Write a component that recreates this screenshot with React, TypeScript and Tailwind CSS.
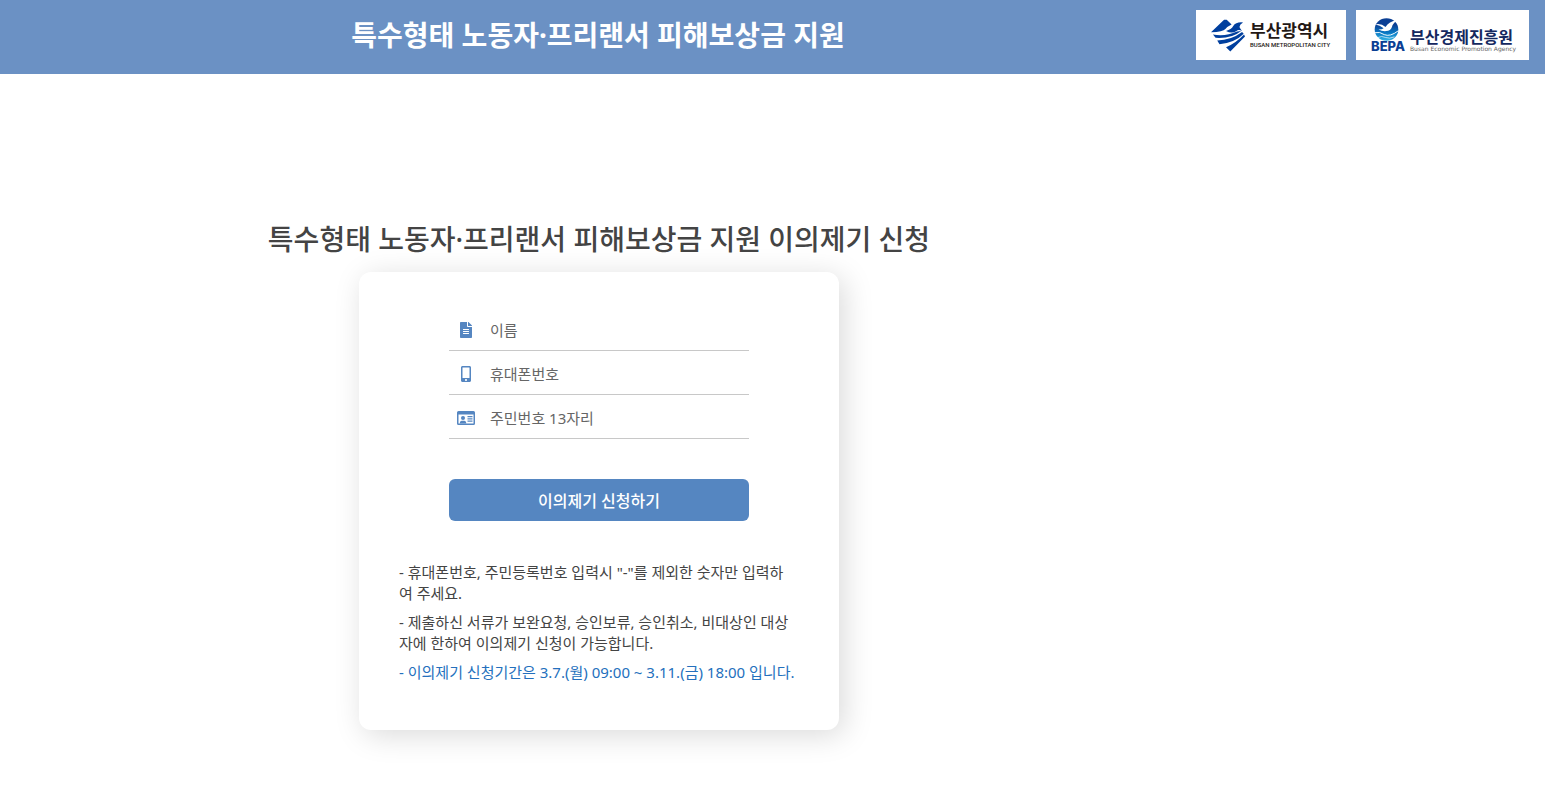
import { useState } from 'react'
import type { ReactNode } from 'react'
import { FaFileAlt, FaMobileAlt } from 'react-icons/fa'

type FieldProps = {
  id: string
  label: string
  icon: ReactNode
  type?: string
  value: string
  onChange: (value: string) => void
}

function Field({ id, label, icon, type = 'text', value, onChange }: FieldProps) {
  return (
    <div className="flex h-10 items-center border-b border-[#c8c8c8] pb-[2px]">
      <label htmlFor={id} aria-label={label} className="flex w-[34px] shrink-0 justify-center text-base text-[#5586c1]">
        {icon}
      </label>
      <input
        id={id}
        type={type}
        placeholder={label}
        value={value}
        onChange={(e) => onChange(e.target.value)}
        className="ml-[7px] h-full min-w-0 flex-1 bg-transparent text-[15px] text-[#444] outline-none placeholder:text-[#666]"
      />
    </div>
  )
}

function IdCardIcon() {
  return (
    <svg viewBox="0 0 18 14" className="h-[14px] w-[18px]" fill="currentColor" aria-hidden="true">
      <path fillRule="evenodd" d="M1.5 0h15A1.5 1.5 0 0 1 18 1.5v11a1.5 1.5 0 0 1-1.5 1.5h-15A1.5 1.5 0 0 1 0 12.5v-11A1.5 1.5 0 0 1 1.5 0zM1.5 3.5v9h15v-9z" />
      <circle cx="6" cy="7" r="2" />
      <path d="M2.8 12.5q0-2.8 2-2.8h2.4q2 0 2 2.8z" />
      <path d="M10.5 5h5v1.2h-5zM10.5 7.3h5v1.2h-5zM10.5 9.6h5v1.2h-5z" />
    </svg>
  )
}

function BusanLogo() {
  return (
    <a href="#busan" className="flex h-[50px] w-[150px] items-center gap-[5px] bg-white pl-[15px]">
      <svg viewBox="14 14 104 100" className="h-[33px] w-[34px] shrink-0" fill="#003f9e" aria-hidden="true">
        <path d="M14 54 L54 16 L62 16 L77 30 Q64 36 58 44 Q51 53 14 54Z" />
        <path d="M60 50 Q76 46 82 35 Q90 22 112 24 Q102 29 101 38 Q104 44 109 50 Q98 45 92 50 Q78 60 60 50Z" />
        <path d="M20 61 Q58 68 94 52 L106 50 Q78 74 28 71Z" />
        <path d="M33 79 Q76 78 109 53 L114 59 Q88 86 40 91Z" />
        <path d="M60 100 Q92 86 115 61 L118 67 L73 113Z" />
      </svg>
      <span className="flex flex-col pb-px whitespace-nowrap">
        <span className="text-[17px] leading-5 font-bold text-[#231815]">부산광역시</span>
        <span className="font-[Roboto] text-[6px] leading-[8px] font-medium text-[#231815]">BUSAN METROPOLITAN CITY</span>
      </span>
    </a>
  )
}

function BepaLogo() {
  return (
    <a href="#bepa" className="flex h-[50px] w-[173px] items-end gap-1 bg-white pb-2 pl-[15px]">
      <span className="flex w-[35px] shrink-0 flex-col">
        <svg viewBox="24 14 78 72" className="ml-[3px] h-[23px] w-[25px]" aria-hidden="true">
          <defs>
            <linearGradient id="sea" x1="0" y1="0" x2="0" y2="1">
              <stop offset="0.3" stopColor="#0b3f94" />
              <stop offset="0.65" stopColor="#0879c4" />
              <stop offset="1" stopColor="#35b5e5" />
            </linearGradient>
          </defs>
          <ellipse cx="63" cy="50" rx="37" ry="35" fill="url(#sea)" />
          <path fill="#fff" d="M28 34 Q46 30 60 42 Q70 24 96 21 Q82 32 80 42 Q76 54 62 55 Q48 56 38 50 Q50 50 54 46 Q42 36 28 34Z" />
          <path fill="none" stroke="#fff" strokeWidth="3" d="M26 60 Q42 56 56 66 Q74 74 100 54" />
          <path fill="none" stroke="#fff" strokeWidth="2" d="M34 76 Q48 68 60 75 Q72 80 88 73" />
        </svg>
        <span className="font-[Inter] text-[13px] leading-[11px] font-extrabold text-[#0b3f94]">BEPA</span>
      </span>
      <span className="flex flex-col whitespace-nowrap">
        <span className="text-[16px] leading-[18px] font-bold text-[#14285f]">부산경제진흥원</span>
        <span className="font-['DejaVu_Sans'] text-[6px] leading-[6px] text-[#666]">Busan Economic Promotion Agency</span>
      </span>
    </a>
  )
}

export default function App() {
  const [name, setName] = useState('')
  const [phone, setPhone] = useState('')
  const [residentNo, setResidentNo] = useState('')

  return (
    <div className="min-h-screen bg-white font-['Noto_Sans','Noto_Sans_CJK_KR',sans-serif] text-[#444]">
      <header className="flex items-start bg-[#6b91c4] pt-[10px] pr-4 pb-[14px]">
        <h1 className="max-w-[1198px] flex-1 text-center text-[28px] leading-[50px] font-bold text-white">
          특수형태 노동자·프리랜서 피해보상금 지원
        </h1>
        <div className="ml-auto flex gap-[10px]">
          <BusanLogo />
          <BepaLogo />
        </div>
      </header>

      <main className="max-w-[1198px] pt-36 pb-16">
        <h2 className="text-center text-[28px] leading-[42px] font-medium">
          특수형태 노동자·프리랜서 피해보상금 지원 이의제기 신청
        </h2>
        <section className="mx-auto mt-3 w-full max-w-[480px] rounded-xl bg-white px-10 pt-[39px] pb-[47px] shadow-[5px_5px_30px_rgba(0,0,0,0.15)]">
          <form className="mx-auto max-w-[300px]" onSubmit={(e) => e.preventDefault()}>
            <div className="flex flex-col gap-1">
              <Field id="name" label="이름" icon={<FaFileAlt />} value={name} onChange={setName} />
              <Field id="phone" label="휴대폰번호" type="tel" icon={<FaMobileAlt />} value={phone} onChange={setPhone} />
              <Field id="resident-no" label="주민번호 13자리" icon={<IdCardIcon />} value={residentNo} onChange={setResidentNo} />
            </div>
            <button type="submit" className="mt-10 h-[42px] w-full rounded-md bg-[#5586c1] pt-px text-base font-medium text-white">
              이의제기 신청하기
            </button>
          </form>

          <div className="mt-[41px] flex flex-col gap-2 text-[15px] leading-[21px]">
            <p>
              - 휴대폰번호, 주민등록번호 입력시 "-"를 제외한 숫자만 입력하
              <br />
              여 주세요.
            </p>
            <p>- 제출하신 서류가 보완요청, 승인보류, 승인취소, 비대상인 대상자에 한하여 이의제기 신청이 가능합니다.</p>
            <p className="text-[#2470bd]">- 이의제기 신청기간은 3.7.(월) 09:00 ~ 3.11.(금) 18:00 입니다.</p>
          </div>
        </section>
      </main>
    </div>
  )
}
